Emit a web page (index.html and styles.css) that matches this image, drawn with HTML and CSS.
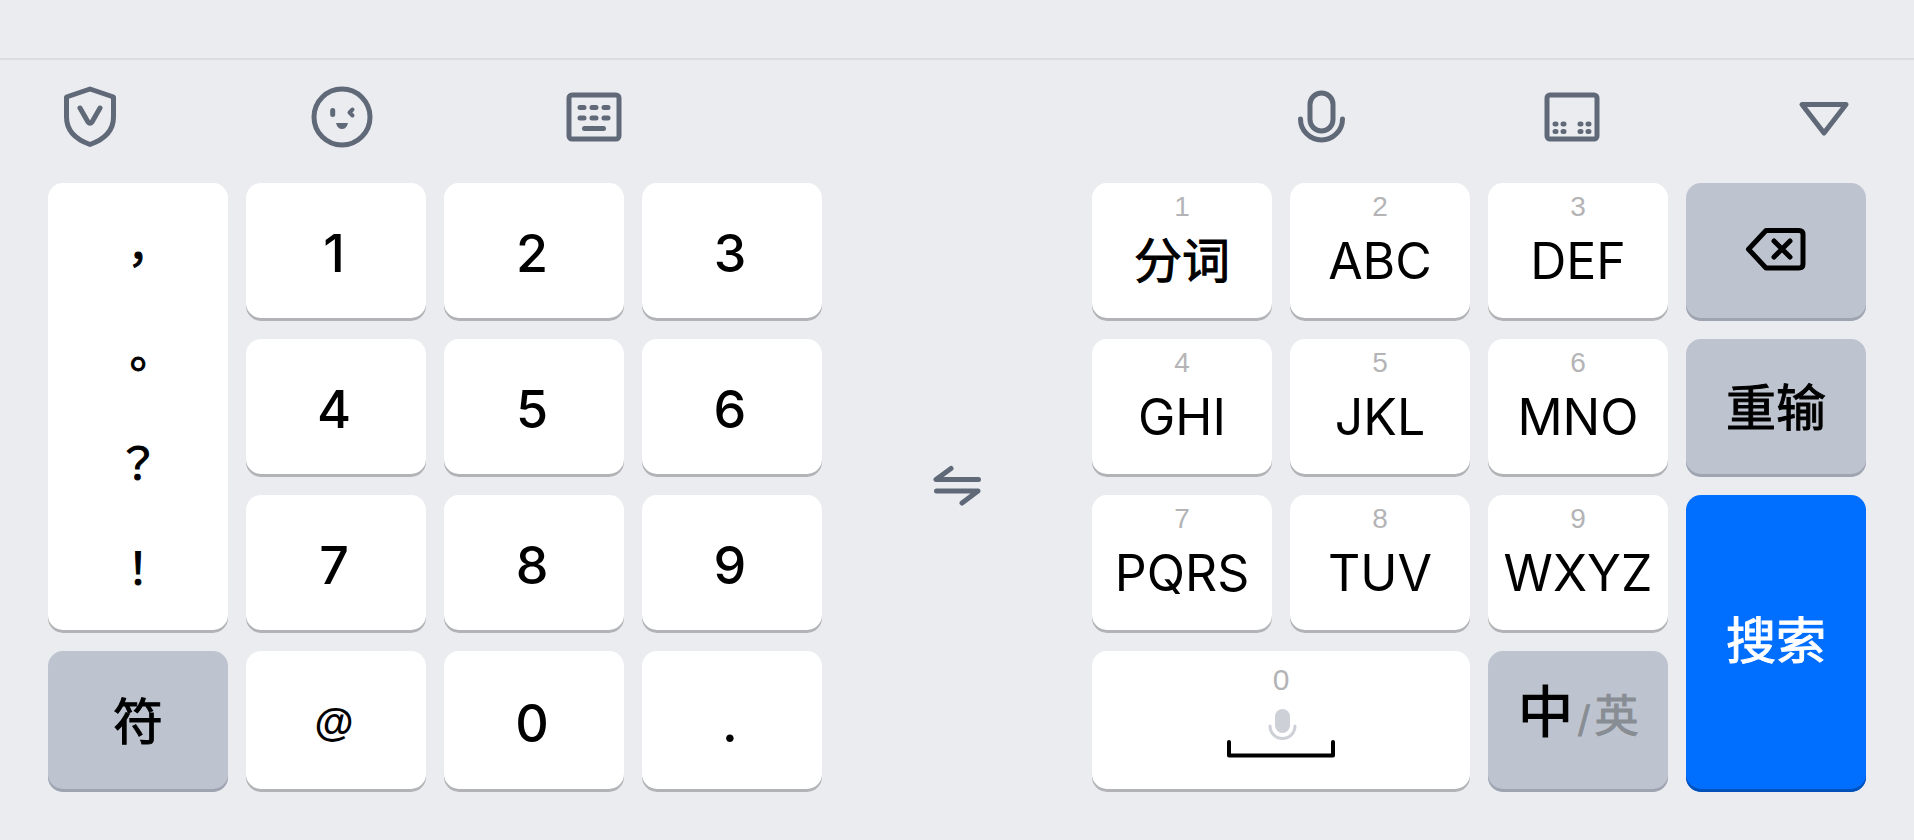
FILE: index.html
```html
<!DOCTYPE html>
<html lang="zh-CN">
<head>
<meta charset="utf-8">
<title>键盘</title>
<link rel="stylesheet" href="styles.css">
</head>
<body>
<div class="candidates"></div>

<div class="toolbar">
  <div class="tools">
    <button class="tool" aria-label="安全">
      <svg viewBox="0 0 84 84"><path d="M42 14L65.500 22V42C65.500 56 56 64.500 42 69.500C28 64.500 18.500 56 18.500 42V22Z"/><path d="M32 33L40 47Q42 49.500 44 47L52 33"/></svg>
    </button>
    <button class="tool" aria-label="表情">
      <svg viewBox="0 0 84 84"><circle cx="42" cy="42" r="28"/><path d="M32.700 35.500V39.500"/><path d="M52.500 34.500L49.500 37.500L52.500 40.500" stroke-width="4"/><path class="solid" d="M36 48H48Q46.500 54 42 54Q37.500 54 36 48Z"/></svg>
    </button>
    <button class="tool" aria-label="键盘">
      <svg viewBox="0 0 84 84"><rect x="17" y="20" width="50" height="44" rx="3"/><path d="M28 32.500H32M40 32.500H44M52 32.500H56M28 43H32M40 43H44M52 43H56M32.500 53.500H51.500"/></svg>
    </button>
  </div>
  <div class="tools">
    <button class="tool" aria-label="语音">
      <svg viewBox="0 0 84 84"><rect x="32" y="18" width="23" height="38" rx="11.500"/><path d="M22.500 44A21 21 0 0 0 64.500 44"/></svg>
    </button>
    <button class="tool" aria-label="分离键盘">
      <svg viewBox="0 0 84 84"><rect x="17" y="20" width="50" height="44" rx="3"/><path d="M25 49H26M33 49H34M50 49H51M58 49H59M25 56.500H26M33 56.500H34M50 56.500H51M58 56.500H59"/></svg>
    </button>
    <button class="tool" aria-label="收起">
      <svg viewBox="0 0 84 84"><path d="M20 29.500H64L42 58Z"/></svg>
    </button>
  </div>
</div>

<div class="keyboard">
  <div class="pad">
    <div class="key marks">
      <button class="mark low">，</button>
      <button class="mark low">。</button>
      <button class="mark">？</button>
      <button class="mark">！</button>
    </div>
    <button class="key num">1</button>
    <button class="key num">2</button>
    <button class="key num">3</button>
    <button class="key num">4</button>
    <button class="key num">5</button>
    <button class="key num">6</button>
    <button class="key num">7</button>
    <button class="key num">8</button>
    <button class="key num">9</button>
    <button class="key gray">符</button>
    <button class="key at">@</button>
    <button class="key num">0</button>
    <button class="key num">.</button>
  </div>

  <button class="swap" aria-label="切换左右">
    <svg width="48" height="42" viewBox="0 0 48 42"><path d="M18 3.500L3 14.500H45.500M3.500 26H45L29 38"/></svg>
  </button>

  <div class="pad">
    <button class="key t9"><span class="hint">1</span><span class="label han">分词</span></button>
    <button class="key t9"><span class="hint">2</span><span class="label">ABC</span></button>
    <button class="key t9"><span class="hint">3</span><span class="label">DEF</span></button>
    <button class="key gray delete" aria-label="删除">
      <svg width="62" height="46" viewBox="0 0 62 46"><path d="M22 4.500H55Q59 4.500 59 8.500V38Q59 42 55 42H22L4.500 23.200Z"/><path d="M30 15L46 31M46 15L30 31"/></svg>
    </button>
    <button class="key t9"><span class="hint">4</span><span class="label">GHI</span></button>
    <button class="key t9"><span class="hint">5</span><span class="label">JKL</span></button>
    <button class="key t9"><span class="hint">6</span><span class="label">MNO</span></button>
    <button class="key gray">重输</button>
    <button class="key t9"><span class="hint">7</span><span class="label">PQRS</span></button>
    <button class="key t9"><span class="hint">8</span><span class="label">TUV</span></button>
    <button class="key t9"><span class="hint">9</span><span class="label">WXYZ</span></button>
    <button class="key search">搜索</button>
    <button class="key space" aria-label="空格">
      <span class="hint">0</span>
      <svg width="108" height="50" viewBox="0 0 108 50"><rect class="mic" x="48" y="1" width="15" height="24" rx="7.500"/><path class="arc" d="M43 18A12.500 12.500 0 0 0 68 18"/><path d="M2 34V47.500H106V34"/></svg>
    </button>
    <button class="key gray lang"><span class="zh">中</span><span class="slash">/</span><span class="en">英</span></button>
  </div>
</div>
</body>
</html>
```
FILE: styles.css
```css
* { box-sizing: border-box; }

body {
  margin: 0;
  min-height: 100vh;
  background: #ebecf0;
  font-family: Inter, "Noto Sans CJK SC", sans-serif;
  color: #000;
}

button {
  margin: 0;
  padding: 0;
  border: 0;
  background: none;
  font: inherit;
  color: inherit;
}

svg {
  display: block;
  fill: none;
  stroke: #606978;
  stroke-width: 5;
  stroke-linecap: round;
  stroke-linejoin: round;
}

.solid {
  fill: #606978;
  stroke: none;
}

/* top */

.candidates {
  height: 60px;
  border-bottom: 2px solid #dcdde1;
}

.toolbar {
  display: flex;
  justify-content: space-between;
  padding: 15px 48px 24px;
}

.tools {
  display: flex;
  gap: 168px;
}

.tool {
  width: 84px;
  height: 84px;
}

/* keys */

.keyboard {
  display: flex;
  padding: 0 48px 48px;
}

.pad {
  flex: 43 1 0;
  display: grid;
  grid-template-columns: repeat(4, minmax(0, 1fr));
  grid-template-rows: 138px 138px 138px 141px;
  gap: 18px;
}

.key {
  display: flex;
  align-items: center;
  justify-content: center;
  border-radius: 15px;
  background: #fff;
  box-shadow: inset 0 -3px 0 #b2b3b7;
  font-size: 50px;
  line-height: 60px;
}

.marks {
  grid-row: span 3;
  flex-direction: column;
  font-family: "Noto Sans CJK TC", sans-serif;
  font-size: 44px;
  -webkit-text-stroke: 1px;
}

.mark {
  width: 100%;
  height: 105px;
}

.low {
  padding-top: 12px;
}

.num {
  padding: 4px 4px 0 0;
  font-size: 52px;
  font-weight: 500;
}

.at {
  padding-right: 4px;
  font-family: "Liberation Sans", Arial, sans-serif;
  font-size: 40px;
  font-weight: bold;
}

.gray {
  background: #bec4cf;
  box-shadow: inset 0 -3px 0 #9ea4b0;
  -webkit-text-stroke: 1px;
}

.gray svg {
  stroke: #000;
}

.delete {
  padding: 0 2px 6px 0;
}

.search {
  grid-row: span 2;
  padding-bottom: 6px;
  background: #006eff;
  box-shadow: inset 0 -3px 0 #0050b9;
  color: #fff;
  -webkit-text-stroke: 1px;
}

.t9 {
  flex-direction: column;
  justify-content: flex-start;
  gap: 8px;
  padding-top: 8px;
}

.hint {
  font-family: "Liberation Sans", Arial, sans-serif;
  font-size: 28px;
  line-height: 32px;
  color: #b4b4b6;
}

.han {
  font-size: 48px;
  -webkit-text-stroke: 1px;
}

.space {
  grid-column: span 2;
  flex-direction: column;
  justify-content: flex-start;
  gap: 12px;
  padding-top: 13px;
}

.space .hint {
  font-size: 30px;
}

.space svg {
  stroke: #000;
  stroke-width: 4;
}

.space .mic {
  fill: #cdd0d6;
  stroke: none;
}

.space .arc {
  stroke: #cdd0d6;
  stroke-width: 3;
}

.lang {
  flex-wrap: wrap;
  align-items: baseline;
  align-content: center;
  gap: 4px;
  padding-bottom: 12px;
}

.zh {
  font-size: 56px;
  font-weight: 500;
  -webkit-text-stroke: 0;
}

.slash, .en {
  color: #888d94;
}

.slash {
  font-size: 36px;
}

.en {
  font-size: 44px;
}

.swap {
  flex: 15 1 0;
  display: flex;
  align-items: center;
  justify-content: center;
  padding-bottom: 4px;
}
```
